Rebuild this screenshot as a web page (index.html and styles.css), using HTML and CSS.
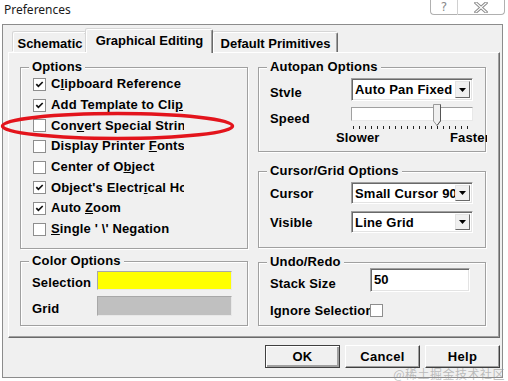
FILE: index.html
```html
<!DOCTYPE html>
<html>
<head>
<meta charset="utf-8">
<title>Preferences</title>
<link rel="stylesheet" href="styles.css">
</head>
<body>
<div class="titlebar">
  <span class="title">Preferences</span>
  <div class="caption">
    <span class="cbtn cbtn-help">?</span>
    <span class="cbtn cbtn-close">
      <svg width="14" height="11" viewBox="0 0 14 11"><path d="M2 1 L12 10 M12 1 L2 10" stroke="#8a8a8a" stroke-width="3.2" stroke-linecap="square"/><path d="M2 1 L12 10 M12 1 L2 10" stroke="#fff" stroke-width="1.2" stroke-linecap="square"/></svg>
    </span>
  </div>
</div>

<div class="frame">
  <div class="tabs">
    <div class="tab tab-schematic">Schematic</div>
    <div class="tab tab-active">Graphical Editing</div>
    <div class="tab tab-default">Default Primitives</div>
  </div>

  <div class="panel">
    <div class="col">
      <div class="group group-options">
        <div class="group-title">Options</div>
        <div class="opt"><span class="check"><svg viewBox="0 0 11 11"><path d="M2.3 5.2 L4.4 7.4 L8.7 3" /></svg></span><span class="opt-label">C<u>l</u>ipboard Reference</span></div>
        <div class="opt"><span class="check"><svg viewBox="0 0 11 11"><path d="M2.3 5.2 L4.4 7.4 L8.7 3" /></svg></span><span class="opt-label">Add Template to Cli<u>p</u> board</span></div>
        <div class="opt"><span class="check"></span><span class="opt-label">Con<u>v</u>ert Special Strings</span></div>
        <div class="opt"><span class="check"></span><span class="opt-label">Display Printer <u>F</u>onts</span></div>
        <div class="opt"><span class="check"></span><span class="opt-label">Center of O<u>b</u>ject</span></div>
        <div class="opt"><span class="check"><svg viewBox="0 0 11 11"><path d="M2.3 5.2 L4.4 7.4 L8.7 3" /></svg></span><span class="opt-label">Object's Electr<u>i</u>cal Hot Spot</span></div>
        <div class="opt"><span class="check"><svg viewBox="0 0 11 11"><path d="M2.3 5.2 L4.4 7.4 L8.7 3" /></svg></span><span class="opt-label">Auto <u>Z</u>oom</span></div>
        <div class="opt"><span class="check"></span><span class="opt-label"><u>S</u>ingle ' \' Negation</span></div>
      </div>

      <div class="group group-color">
        <div class="group-title">Color Options</div>
        <div class="color-row color-row-first"><span class="color-label">Selection</span><span class="swatch swatch-yellow"></span></div>
        <div class="color-row"><span class="color-label">Grid</span><span class="swatch swatch-gray"></span></div>
      </div>
    </div>

    <div class="col">
      <div class="group group-autopan">
        <div class="group-title">Autopan Options</div>
        <div class="form-grid">
          <span class="field-label label-style">Stvle</span>
          <div class="select"><span class="select-value">Auto Pan Fixed</span><span class="select-btn"><svg width="7" height="4" viewBox="0 0 7 4"><path d="M0 0 H7 L3.5 4 Z" fill="#000"/></svg></span></div>
          <span class="field-label label-speed">Speed</span>
          <div class="slider">
            <div class="track"></div>
            <svg class="thumb" width="8" height="22" viewBox="0 0 8 22"><path d="M0.5 0.5 H7.5 V17 L4 21.5 L0.5 17 Z" fill="#f0f0f0" stroke="#9a9a9a"/><path d="M7.5 0.5 V17 L4 21.5" fill="none" stroke="#555"/></svg>
            <div class="ticks"></div>
          </div>
        </div>
        <div class="speed-scale"><span>Slower</span><span>Faster</span></div>
      </div>

      <div class="group group-cursor">
        <div class="group-title">Cursor/Grid Options</div>
        <div class="form-grid form-grid-cursor">
          <span class="field-label">Cursor</span>
          <div class="select select-sm"><span class="select-value">Small Cursor 90</span><span class="select-btn"><svg width="7" height="4" viewBox="0 0 7 4"><path d="M0 0 H7 L3.5 4 Z" fill="#000"/></svg></span></div>
          <span class="field-label">Visible</span>
          <div class="select select-sm"><span class="select-value">Line Grid</span><span class="select-btn"><svg width="7" height="4" viewBox="0 0 7 4"><path d="M0 0 H7 L3.5 4 Z" fill="#000"/></svg></span></div>
        </div>
      </div>

      <div class="group group-undo">
        <div class="group-title">Undo/Redo</div>
        <div class="undo-grid">
          <span class="field-label label-stack">Stack Size</span>
          <div class="input">50</div>
          <span class="field-label label-ignore">Ignore Selection</span>
          <span class="check"></span>
        </div>
      </div>
    </div>
  </div>

  <div class="actions">
    <div class="btn btn-default">OK</div>
    <div class="btn">Cancel</div>
    <div class="btn">Help</div>
  </div>
</div>

<svg class="annotation" width="240" height="34" viewBox="0 0 240 34"><ellipse cx="117.5" cy="16" rx="115" ry="12.5" fill="none" stroke="#e3141c" stroke-width="3.5"/></svg>
<div class="watermark">@稀土掘金技术社区</div>
</body>
</html>
```

FILE: styles.css
```css
* { box-sizing: border-box; }
html, body { margin: 0; padding: 0; }
body {
  width: 508px;
  height: 381px;
  background: #fff;
  font-family: "Liberation Sans", Arial, sans-serif;
  font-size: 13px;
  font-weight: bold;
  color: #000;
  overflow: hidden;
  position: relative;
}
u { text-decoration: underline; text-underline-offset: 1px; }

/* title bar */
.titlebar { height: 24px; display: flex; align-items: flex-start; background: #fff; }
.title {
  font-family: "Noto Sans", sans-serif;
  font-weight: normal;
  font-size: 12px;
  line-height: 20px;
  padding-left: 4px;
  color: #1a1a1a;
}
.caption { margin-left: auto; margin-right: 3px; display: flex; height: 15px; }
.cbtn {
  border: 1px solid #b0b0b0;
  border-top: none;
  display: flex;
  align-items: center;
  justify-content: center;
  color: #8a8a8a;
  font-family: "DejaVu Sans", sans-serif;
  font-weight: normal;
  font-size: 12px;
}
.cbtn-help { width: 28px; border-radius: 0 0 0 4px; border-right: 1px solid #d0d0d0; }
.cbtn-close { width: 47px; border-radius: 0 0 4px 0; border-left: none; }

/* window frame */
.frame {
  height: 354px;
  margin: 0 5px 0 2px;
  border: 1px solid #8c8c8c;
  background: #f0f0f0;
  display: flex;
  flex-direction: column;
  padding: 0 2px 0 5px;
}

/* tabs */
.tabs { height: 27px; flex: none; display: flex; align-items: flex-end; padding-left: 5px; position: relative; z-index: 1; }
.tab {
  height: 20px;
  display: flex;
  align-items: center;
  justify-content: center;
  border: 1px solid;
  border-color: #fff #6a6a6a transparent #fff;
  border-bottom: none;
  border-radius: 2px 2px 0 0;
  box-shadow: -1px -1px 0 #d6d6d6, inset -1px 0 0 #a0a0a0;
  background: #f0f0f0;
  padding-top: 2px;
  white-space: nowrap;
}
.tab-schematic { width: 74px; }
.tab-active {
  width: 127px;
  height: 24px;
  margin-left: -1px;
  margin-bottom: -1px;
  padding-top: 0;
  padding-bottom: 2px;
  position: relative;
  z-index: 2;
}
.tab-default { width: 125px; }

/* panel */
.panel {
  flex: none;
  height: 286px;
  border: 1px solid;
  border-color: #fff #6a6a6a #6a6a6a #fff;
  box-shadow: inset -1px -1px 0 #a0a0a0;
  display: flex;
  gap: 10px;
  padding: 14px 0 0 11px;
}
.col { width: 228px; display: flex; flex-direction: column; }

/* groups */
.group {
  flex: none;
  border: 1px solid #a0a0a0;
  box-shadow: 1px 1px 0 #fff, inset 1px 1px 0 #fff;
  padding: 0 11px;
}
.group-title {
  display: block;
  width: max-content;
  height: 14px;
  margin: -8px 0 0 -3px;
  padding: 0 3px;
  line-height: 14px;
  background: #f0f0f0;
  white-space: nowrap;
  letter-spacing: 0.15px;
}
.group-options { height: 182px; }
.group-color { height: 65px; margin-top: 12px; }
.group-autopan { height: 85px; }
.group-cursor { height: 77px; margin-top: 19px; }
.group-undo { height: 64px; margin-top: 14px; }

/* checkboxes */
.opt { height: 20.7px; display: flex; align-items: center; }
.check {
  flex: none;
  width: 13px;
  height: 13px;
  background: #fff;
  border: 1px solid #8e8e8e;
  display: flex;
  align-items: center;
  justify-content: center;
}
.opt .check { margin-left: 1px; margin-right: 5px; }
.check svg { width: 11px; height: 11px; }
.check path { fill: none; stroke: #111; stroke-width: 1.7; }
.opt-label { width: 133px; overflow: hidden; white-space: nowrap; letter-spacing: 0.15px; line-height: 16px; }

/* color options */
.color-row { display: flex; align-items: center; height: 20px; margin-top: 6px; }
.color-row-first { margin-top: 2px; }
.color-label { width: 65px; padding-top: 4px; letter-spacing: 0.15px; }
.swatch {
  width: 135px;
  height: 20px;
  border: 1px solid;
  border-color: #a8a8a8 #e8e8e8 #e8e8e8 #a8a8a8;
}
.swatch-yellow { background: #ffff00; height: 19px; }
.swatch-gray { background: #c0c0c0; }

/* form grid */
.form-grid {
  display: grid;
  grid-template-columns: 81px 122px;
  margin-top: 4px;
}
.field-label { white-space: nowrap; letter-spacing: 0.15px; }
.form-grid .field-label { align-self: center; }
.form-grid .label-style { padding-top: 5px; }
.form-grid .label-speed { align-self: start; margin-top: 10px; }

.select {
  height: 23px;
  display: flex;
  background: #fff;
  border: 1px solid;
  border-color: #a0a0a0 #fff #fff #a0a0a0;
  box-shadow: inset 1px 1px 0 #696969, inset -1px -1px 0 #e3e3e3;
  padding: 2px 2px 2px 1px;
}
.select-sm { height: 22px; }
.select-value { flex: 1; min-width: 0; overflow: hidden; white-space: nowrap; padding-left: 2px; align-self: center; letter-spacing: 0.2px; }
.select-btn {
  flex: none;
  width: 15px;
  background: #f0f0f0;
  border: 1px solid;
  border-color: #e3e3e3 #696969 #696969 #e3e3e3;
  display: flex;
  align-items: center;
  justify-content: center;
}

.slider { position: relative; height: 28px; margin-top: 2px; }
.track {
  margin-top: 4px;
  height: 14px;
  background: #fff;
  border: 1px solid;
  border-color: #a0a0a0 #e8e8e8 #e8e8e8 #a0a0a0;
}
.thumb { position: absolute; left: 82px; top: 1px; }
.ticks {
  margin: 5px 0 0 2px;
  width: 115px;
  height: 3px;
  background: repeating-linear-gradient(to right, #222 0 1px, transparent 1px 6px);
}
.speed-scale {
  display: grid;
  grid-template-columns: 114px 60px;
  width: 151px;
  margin-left: 66px;
  overflow: hidden;
  line-height: 14px;
  white-space: nowrap;
  letter-spacing: 0.15px;
}

.form-grid-cursor { row-gap: 7px; }

/* undo */
.undo-grid {
  display: grid;
  grid-template-columns: 100px 100px;
  align-items: center;
  margin-top: -1px;
}
.input {
  height: 24px;
  background: #fff;
  border: 1px solid;
  border-color: #a0a0a0 #fff #fff #a0a0a0;
  box-shadow: inset 1px 1px 0 #696969, inset -1px -1px 0 #e3e3e3;
  padding: 3px 0 0 3px;
}
.label-stack { padding-top: 6px; }
.label-ignore { width: 100px; overflow: hidden; margin-top: 10px; padding-top: 1px; }
.undo-grid .check { margin-top: 10px; }

/* buttons */
.actions { display: flex; justify-content: flex-end; gap: 5px; margin-top: 7px; }
.btn {
  width: 75px;
  height: 23px;
  display: flex;
  align-items: center;
  justify-content: center;
  background: #f0f0f0;
  border: 1px solid;
  border-color: #fff #404040 #404040 #fff;
  box-shadow: inset -1px -1px 0 #a0a0a0;
  letter-spacing: 0.3px;
}
.btn-default {
  border-color: #404040;
  box-shadow: inset 1px 1px 0 #fff, inset -2px -2px 0 #a0a0a0;
}

/* overlays */
.annotation { position: absolute; left: 0; top: 110px; }
.watermark {
  position: absolute;
  right: 3px;
  bottom: 0;
  font-family: "Noto Sans CJK SC", sans-serif;
  font-weight: normal;
  font-size: 12px;
  line-height: 14px;
  color: rgba(150, 150, 150, 0.6);
  letter-spacing: 0.5px;
}
```
